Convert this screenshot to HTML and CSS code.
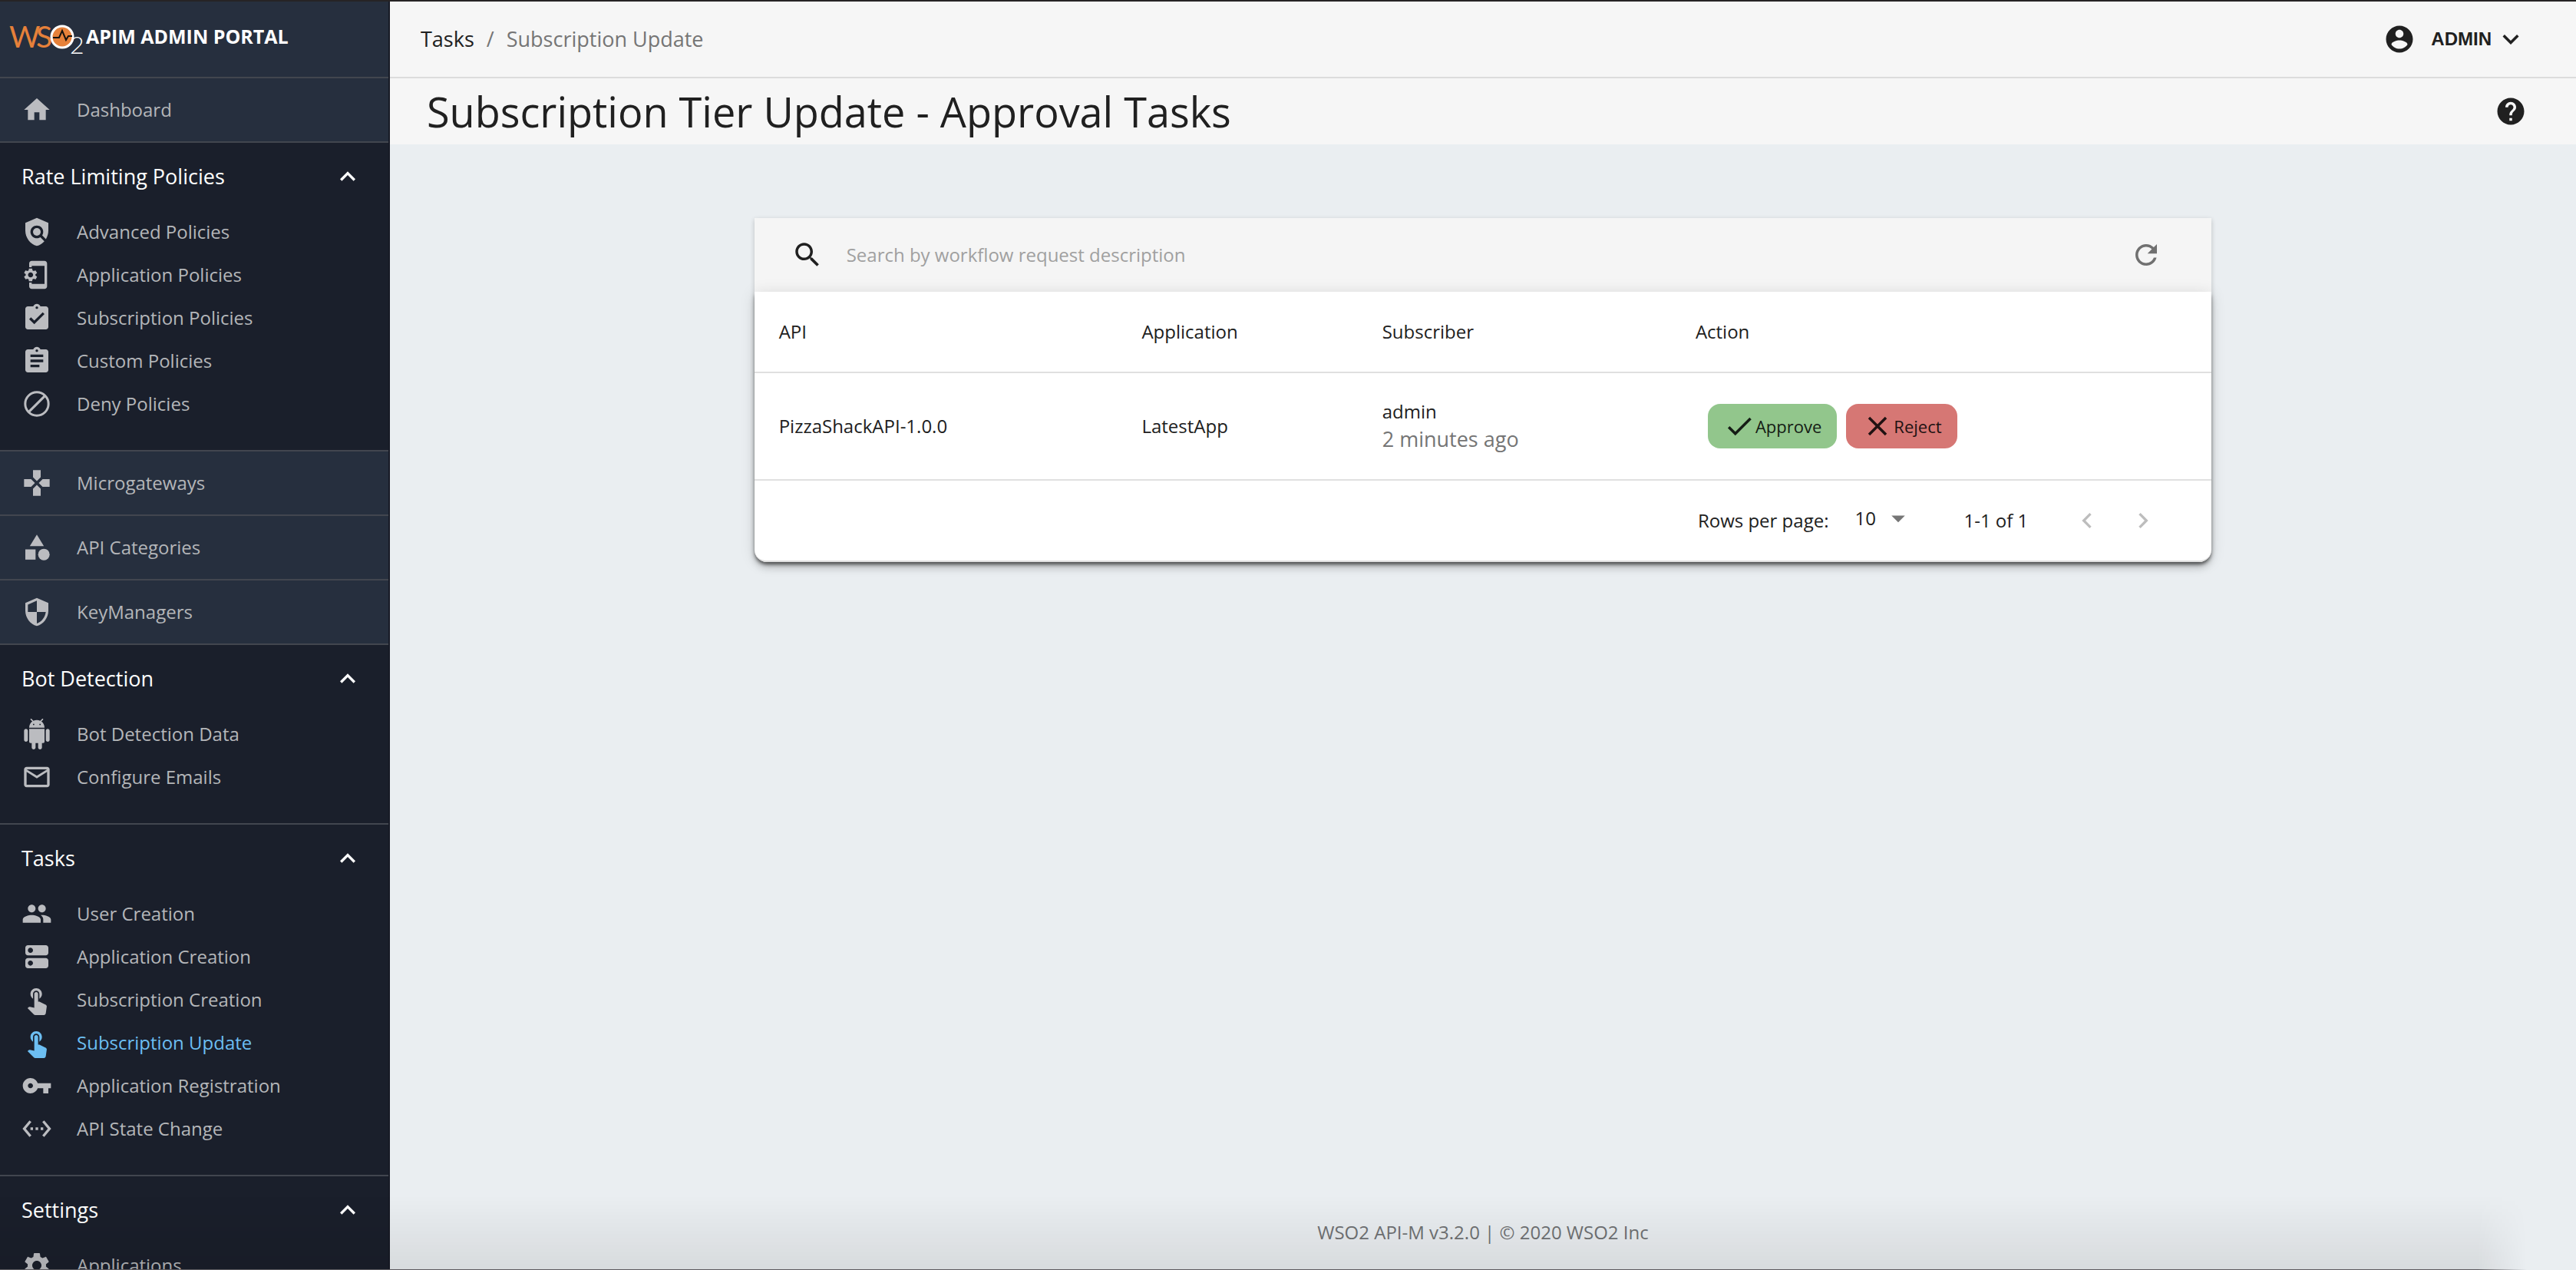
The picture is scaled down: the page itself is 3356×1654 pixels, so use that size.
FILE: index.html
```
<!DOCTYPE html>
<html lang="en">
<head>
<meta charset="utf-8">
<title>APIM Admin Portal - Subscription Update</title>
<meta name="viewport" content="width=device-width, initial-scale=1">
<link rel="stylesheet" href="styles.css">
</head>
<body>
<svg class="sprite" aria-hidden="true">
  <symbol id="chevron-up" viewBox="0 0 24 24"><path d="M12 8l-6 6 1.410 1.410L12 10.830l4.590 4.580L18 14z"/></symbol>
  <symbol id="touch" viewBox="0 0 24 24"><path d="M9 11.240V7.500C9 6.120 10.120 5 11.500 5S14 6.120 14 7.500v3.740c1.210-.81 2-2.180 2-3.740C16 5.010 13.990 3 11.500 3S7 5.010 7 7.500c0 1.560.79 2.930 2 3.740zm9.840 4.630l-4.540-2.260c-.17-.07-.35-.11-.54-.11H13v-6c0-.83-.67-1.500-1.500-1.500S10 6.670 10 7.500v10.740l-3.430-.72c-.08-.01-.15-.03-.24-.03-.31 0-.59.13-.79.33l-.79.8 4.940 4.940c.27.27.65.44 1.060.44h6.790c.75 0 1.330-.55 1.440-1.280l.75-5.270c.01-.07.02-.14.02-.2 0-.62-.38-1.160-.91-1.380z"/></symbol>
</svg>
<div class="app">
  <aside class="sidebar">
    <a class="brand" href="#" aria-label="WSO2 APIM Admin Portal">
      <svg class="brand-logo" viewBox="0 0 96 44">
        <text class="logo-ws" x="0" y="31">W</text>
        <text class="logo-ws" x="35" y="31">S</text>
        <circle cx="69" cy="17" r="14" fill="#e6813a" stroke="#fff" stroke-width="3"/>
        <path d="M57 18h8l4-9 5 12 3-5h5" fill="none" stroke="#16130f" stroke-width="2"/>
        <text class="logo-two" x="79" y="39">2</text>
      </svg>
      <span>APIM ADMIN PORTAL</span>
    </a>
    <nav>
      <a class="nav-link solo" href="#"><svg viewBox="0 0 24 24"><path d="M10 20v-6h4v6h5v-8h3L12 3 2 12h3v8z"/></svg>Dashboard</a>
      <section class="nav-group">
        <button class="group-title" type="button">Rate Limiting Policies<svg><use href="#chevron-up"/></svg></button>
        <a class="nav-link" href="#"><svg viewBox="0 0 24 24"><path d="M21 5l-9-4-9 4v6c0 5.550 3.840 10.740 9 12 2.300-.56 4.330-1.900 5.880-3.710l-3.120-3.120c-1.940 1.290-4.580 1.070-6.290-.64-1.950-1.950-1.950-5.120 0-7.070 1.950-1.950 5.120-1.950 7.070 0 1.710 1.710 1.920 4.350.64 6.290l2.900 2.900C20.290 15.690 21 13.380 21 11V5z"/><circle cx="12" cy="12" r="3"/></svg>Advanced Policies</a>
        <a class="nav-link" href="#"><svg viewBox="0 0 24 24"><path d="M18 1H8c-1.100 0-2 .9-2 2v3h2V5h10v14H8v-1H6v3c0 1.100.9 2 2 2h10c1.100 0 2-.9 2-2V3c0-1.100-.9-2-2-2z"/><path transform="translate(-.9 0)" d="M11.800 12.500v-1l1.100-.8c.1-.1.1-.2.1-.3l-1-1.700c-.1-.1-.2-.2-.3-.1l-1.300.4c-.3-.2-.6-.4-.9-.5l-.2-1.300c0-.1-.1-.2-.3-.2H7c-.1 0-.2.1-.3.2l-.2 1.300c-.3.1-.6.3-.9.5l-1.300-.5c-.1 0-.2 0-.3.1l-1 1.700c-.1.1 0 .2.1.3l1.100.8v1l-1.100.8c-.1.2-.1.3-.1.4l1 1.700c.1.1.2.2.3.1l1.300-.4c.3.2.6.4.9.5l.2 1.300c0 .1.1.2.3.2h2c.1 0 .2-.1.3-.2l.2-1.300c.3-.1.6-.3.9-.5l1.300.5c.1 0 .2 0 .3-.1l1-1.700c.1-.1 0-.2-.1-.3l-1.100-.9zM8 14c-1.100 0-2-.9-2-2s.9-2 2-2 2 .9 2 2-.9 2-2 2z"/></svg>Application Policies</a>
        <a class="nav-link" href="#"><svg viewBox="0 0 24 24"><path d="M19 3h-4.180C14.400 1.840 13.300 1 12 1s-2.400.84-2.820 2H5c-1.100 0-2 .9-2 2v14c0 1.100.9 2 2 2h14c1.100 0 2-.9 2-2V5c0-1.100-.9-2-2-2zm-7 0c.55 0 1 .45 1 1s-.45 1-1 1-1-.45-1-1 .45-1 1-1zm-2 14l-4-4 1.410-1.410L10 14.170l6.590-6.590L18 9l-8 8z"/></svg>Subscription Policies</a>
        <a class="nav-link" href="#"><svg viewBox="0 0 24 24"><path d="M19 3h-4.180C14.400 1.840 13.300 1 12 1s-2.400.84-2.820 2H5c-1.100 0-2 .9-2 2v14c0 1.100.9 2 2 2h14c1.100 0 2-.9 2-2V5c0-1.100-.9-2-2-2zm-7 0c.55 0 1 .45 1 1s-.45 1-1 1-1-.45-1-1 .45-1 1-1zm2 14H7v-2h7v2zm3-4H7v-2h10v2zm0-4H7V7h10v2z"/></svg>Custom Policies</a>
        <a class="nav-link" href="#"><svg viewBox="0 0 24 24"><circle cx="12" cy="12" r="9.100" fill="none" stroke="currentColor" stroke-width="1.800"/><path d="M18.400 5.600L5.600 18.400" stroke="currentColor" stroke-width="1.900"/></svg>Deny Policies</a>
      </section>
      <a class="nav-link solo" href="#"><svg viewBox="0 0 24 24"><path d="M15 7.500V2H9v5.500l3 3 3-3zM7.500 9H2v6h5.500l3-3-3-3zM9 16.500V22h6v-5.500l-3-3-3 3zM16.500 9l-3 3 3 3H22V9h-5.500z"/></svg>Microgateways</a>
      <a class="nav-link solo" href="#"><svg viewBox="0 0 24 24"><path d="M12 2l-5.500 9h11z"/><circle cx="17.500" cy="17.500" r="4.500"/><path d="M3 13.500h8v8H3z"/></svg>API Categories</a>
      <a class="nav-link solo" href="#"><svg viewBox="0 0 24 24"><path d="M12 1L3 5v6c0 5.550 3.840 10.740 9 12 5.160-1.260 9-6.450 9-12V5l-9-4zm0 10.990h7c-.53 4.120-3.280 7.790-7 8.940V12H5V6.300l7-3.110v8.800z"/></svg>KeyManagers</a>
      <section class="nav-group">
        <button class="group-title" type="button">Bot Detection<svg><use href="#chevron-up"/></svg></button>
        <a class="nav-link" href="#"><svg viewBox="0 0 24 24"><path d="M6 18c0 .55.45 1 1 1h1v3.500c0 .83.67 1.500 1.500 1.500s1.500-.67 1.500-1.500V19h2v3.500c0 .83.67 1.500 1.500 1.500s1.500-.67 1.500-1.500V19h1c.55 0 1-.45 1-1V8H6v10zM3.500 8C2.670 8 2 8.670 2 9.500v7c0 .83.67 1.500 1.500 1.500S5 17.330 5 16.500v-7C5 8.670 4.330 8 3.500 8zm17 0c-.83 0-1.500.67-1.500 1.500v7c0 .83.67 1.500 1.500 1.500s1.500-.67 1.500-1.500v-7c0-.83-.67-1.500-1.500-1.500zm-4.970-5.840l1.300-1.300c.2-.2.2-.51 0-.71-.2-.2-.51-.2-.71 0l-1.480 1.480C13.850 1.230 12.950 1 12 1c-.96 0-1.860.23-2.660.63L7.850.15c-.2-.2-.51-.2-.71 0-.2.2-.2.51 0 .71l1.310 1.310C6.970 3.260 6 5.010 6 7h12c0-1.990-.97-3.750-2.470-4.840zM10 5H9V4h1v1zm5 0h-1V4h1v1z"/></svg>Bot Detection Data</a>
        <a class="nav-link" href="#"><svg viewBox="0 0 24 24"><path d="M20 4H4c-1.100 0-2 .9-2 2v12c0 1.100.9 2 2 2h16c1.100 0 2-.9 2-2V6c0-1.100-.9-2-2-2zm0 14H4V8l8 5 8-5v10zm-8-7L4 6h16l-8 5z"/></svg>Configure Emails</a>
      </section>
      <section class="nav-group">
        <button class="group-title" type="button">Tasks<svg><use href="#chevron-up"/></svg></button>
        <a class="nav-link" href="#"><svg viewBox="0 0 24 24"><path d="M16 11c1.660 0 2.990-1.340 2.990-3S17.660 5 16 5c-1.660 0-3 1.340-3 3s1.340 3 3 3zm-8 0c1.660 0 2.990-1.340 2.990-3S9.660 5 8 5C6.340 5 5 6.340 5 8s1.340 3 3 3zm0 2c-2.330 0-7 1.170-7 3.500V19h14v-2.500c0-2.330-4.670-3.500-7-3.500zm8 0c-.29 0-.62.02-.97.05 1.160.84 1.970 1.970 1.970 3.450V19h6v-2.500c0-2.330-4.670-3.500-7-3.500z"/></svg>User Creation</a>
        <a class="nav-link" href="#"><svg viewBox="0 0 24 24"><path d="M19 13H5c-1.100 0-2 .9-2 2v4c0 1.100.9 2 2 2h14c1.100 0 2-.9 2-2v-4c0-1.100-.9-2-2-2zM7 19c-1.100 0-2-.9-2-2s.9-2 2-2 2 .9 2 2-.9 2-2 2zM19 3H5c-1.100 0-2 .9-2 2v4c0 1.100.9 2 2 2h14c1.100 0 2-.9 2-2V5c0-1.100-.9-2-2-2zM7 9c-1.100 0-2-.9-2-2s.9-2 2-2 2 .9 2 2-.9 2-2 2z"/></svg>Application Creation</a>
        <a class="nav-link" href="#"><svg><use href="#touch"/></svg>Subscription Creation</a>
        <a class="nav-link active" href="#" aria-current="page"><svg><use href="#touch"/></svg>Subscription Update</a>
        <a class="nav-link" href="#"><svg viewBox="0 0 24 24"><path d="M12.650 10C11.830 7.670 9.610 6 7 6c-3.310 0-6 2.690-6 6s2.690 6 6 6c2.610 0 4.830-1.670 5.650-4H17v4h4v-4h2v-4H12.650zM7 14c-1.100 0-2-.9-2-2s.9-2 2-2 2 .9 2 2-.9 2-2 2z"/></svg>Application Registration</a>
        <a class="nav-link" href="#"><svg viewBox="0 0 24 24"><path d="M7.770 6.760L6.230 5.480.82 12l5.410 6.520 1.540-1.280L3.420 12l4.350-5.240zM7 13h2v-2H7v2zm10-2h-2v2h2v-2zm-6 2h2v-2h-2v2zm6.770-7.520l-1.540 1.280L20.580 12l-4.350 5.240 1.540 1.280L23.180 12l-5.410-6.520z"/></svg>API State Change</a>
      </section>
      <section class="nav-group">
        <button class="group-title" type="button">Settings<svg><use href="#chevron-up"/></svg></button>
        <a class="nav-link" href="#"><svg viewBox="0 0 24 24"><path d="M19.140 12.940c.04-.3.06-.61.06-.94 0-.32-.02-.64-.07-.94l2.030-1.580c.18-.14.23-.41.12-.61l-1.920-3.320c-.12-.22-.37-.29-.59-.22l-2.390.96c-.5-.38-1.030-.7-1.620-.94l-.36-2.540c-.04-.24-.24-.41-.48-.41h-3.840c-.24 0-.43.17-.47.41l-.36 2.540c-.59.24-1.130.57-1.620.94l-2.390-.96c-.22-.08-.47 0-.59.22L2.740 8.870c-.12.21-.08.47.12.61l2.030 1.580c-.05.3-.09.63-.09.94s.02.64.07.94l-2.030 1.580c-.18.14-.23.41-.12.61l1.920 3.320c.12.22.37.29.59.22l2.390-.96c.5.38 1.030.7 1.620.94l.36 2.540c.05.24.24.41.48.41h3.840c.24 0 .44-.17.47-.41l.36-2.540c.59-.24 1.130-.56 1.620-.94l2.390.96c.22.08.47 0 .59-.22l1.920-3.320c.12-.22.07-.47-.12-.61l-2.010-1.580zM12 15.600c-1.980 0-3.600-1.620-3.600-3.600s1.620-3.600 3.600-3.600 3.600 1.620 3.600 3.600-1.620 3.600-3.600 3.600z"/></svg>Applications</a>
      </section>
    </nav>
  </aside>

  <div class="page">
    <header class="topbar">
      <nav class="breadcrumb" aria-label="Breadcrumb">
        <a href="#">Tasks</a><span>/</span><span>Subscription Update</span>
      </nav>
      <button class="account" type="button">
        <svg class="icon" viewBox="0 0 24 24"><path d="M12 2C6.480 2 2 6.480 2 12s4.480 10 10 10 10-4.480 10-10S17.520 2 12 2zm0 3c1.660 0 3 1.340 3 3s-1.340 3-3 3-3-1.340-3-3 1.340-3 3-3zm0 14.200c-2.500 0-4.710-1.280-6-3.220.03-1.990 4-3.080 6-3.080 1.990 0 5.970 1.090 6 3.080-1.290 1.940-3.500 3.220-6 3.220z"/></svg>
        <span>ADMIN</span>
        <svg class="icon" viewBox="0 0 24 24"><path d="M7.410 8.590L12 13.170l4.590-4.580L18 10l-6 6-6-6z"/></svg>
      </button>
    </header>
    <div class="title-bar">
      <h1>Subscription Tier Update - Approval Tasks</h1>
      <button class="bare" type="button" aria-label="Help">
        <svg class="icon" viewBox="0 0 24 24"><path d="M12 2C6.480 2 2 6.480 2 12s4.480 10 10 10 10-4.480 10-10S17.520 2 12 2zm1 17h-2v-2h2v2zm2.070-7.750l-.9.92C13.450 12.900 13 13.500 13 15h-2v-.5c0-1.100.45-2.100 1.170-2.830l1.240-1.260c.37-.36.59-.86.59-1.410 0-1.100-.9-2-2-2s-2 .9-2 2H8c0-2.210 1.790-4 4-4s4 1.790 4 4c0 .88-.36 1.680-.93 2.250z"/></svg>
      </button>
    </div>

    <main class="content">
      <div class="card">
        <div class="search-bar">
          <label for="search" aria-label="Search"><svg class="icon" viewBox="0 0 24 24"><path d="M15.500 14h-.79l-.28-.27C15.410 12.590 16 11.110 16 9.500 16 5.910 13.090 3 9.500 3S3 5.910 3 9.500 5.910 16 9.500 16c1.610 0 3.090-.59 4.230-1.570l.27.28v.79l5 4.990L20.490 19l-4.990-5zm-6 0C7.010 14 5 11.990 5 9.500S7.010 5 9.500 5 14 7.010 14 9.500 11.990 14 9.500 14z"/></svg></label>
          <input id="search" type="text" placeholder="Search by workflow request description">
          <button class="bare refresh" type="button" aria-label="Refresh">
            <svg class="icon" viewBox="0 0 24 24"><path d="M17.650 6.350C16.200 4.900 14.210 4 12 4c-4.420 0-7.990 3.580-7.990 8s3.570 8 7.990 8c3.730 0 6.840-2.550 7.730-6h-2.080c-.82 2.330-3.040 4-5.650 4-3.310 0-6-2.690-6-6s2.690-6 6-6c1.660 0 3.140.69 4.220 1.780L13 11h7V4l-2.350 2.350z"/></svg>
          </button>
        </div>
        <div class="sheet">
          <table>
            <thead>
              <tr><th class="col-api">API</th><th class="col-app">Application</th><th class="col-sub">Subscriber</th><th>Action</th></tr>
            </thead>
            <tbody>
              <tr>
                <td>PizzaShackAPI-1.0.0</td>
                <td>LatestApp</td>
                <td><div>admin</div><div class="when">2 minutes ago</div></td>
                <td>
                  <div class="actions">
                    <button class="approve" type="button"><svg class="icon" viewBox="0 0 24 24"><path d="M9 16.200L4.800 12l-1.400 1.400L9 19 21 7l-1.400-1.400L9 16.200z"/></svg>Approve</button>
                    <button class="reject" type="button"><svg class="icon" viewBox="0 0 24 24"><path d="M19 6.410L17.590 5 12 10.590 6.410 5 5 6.410 10.590 12 5 17.590 6.410 19 12 13.410 17.590 19 19 17.590 13.410 12z"/></svg>Reject</button>
                  </div>
                </td>
              </tr>
            </tbody>
          </table>
          <div class="pager">
            <label for="rows">Rows per page:</label>
            <div class="rows-select">
              <select id="rows"><option>10</option><option>20</option><option>30</option></select>
              <svg class="icon" viewBox="0 0 24 24"><path d="M7 10l5 5 5-5z"/></svg>
            </div>
            <span class="range">1-1 of 1</span>
            <button class="step" type="button" disabled aria-label="Previous page"><svg viewBox="0 0 24 24"><path d="M15.410 7.410L14 6l-6 6 6 6 1.410-1.410L10.830 12z"/></svg></button>
            <button class="step" type="button" disabled aria-label="Next page"><svg viewBox="0 0 24 24"><path d="M10 6L8.590 7.410 13.170 12l-4.580 4.590L10 18l6-6z"/></svg></button>
          </div>
        </div>
      </div>
    </main>
    <footer>WSO2 API-M v3.2.0 | © 2020 WSO2 Inc</footer>
  </div>
</div>
</body>
</html>
```
FILE: styles.css
```
* { box-sizing: border-box; }

body {
  margin: 0;
  font: 24px/34px "Open Sans", "Noto Sans", sans-serif;
  color: #202020;
  background: #eaeef1;
}

button, input, select {
  font: inherit;
  color: inherit;
  border: 0;
  padding: 0;
  background: none;
}

a { color: inherit; text-decoration: none; }
svg { display: block; flex: none; fill: currentColor; }
.sprite { display: none; }
.icon { width: 42px; height: 42px; }

.app {
  display: flex;
  height: 100vh;
  overflow: hidden;
  border-top: 2px solid #262425;
}

/* soft shade along the lower edge of the window */
.app::after {
  content: "";
  position: fixed;
  inset: auto 0 0 0;
  height: 96px;
  border-bottom: 1px solid #5c5a5f;
  background: linear-gradient(transparent, rgba(0, 0, 0, .08));
  mask-image: linear-gradient(to left, transparent 64px, #000 128px);
  pointer-events: none;
}

/* Sidebar */
.sidebar {
  flex: none;
  width: 508px;
  overflow: hidden;
  border-right: 2px solid #171a25;
  background: #1a1f2b;
}

.brand {
  display: flex;
  align-items: flex-start;
  gap: 4px;
  height: 100px;
  padding: 29px 12px 0;
  border-bottom: 2px solid #42464f;
  background: #262f3e;
  color: #fff;
  font-weight: 700;
  font-size: 25px;
}

.brand span { line-height: 32px; }
.brand-logo { width: 96px; height: 44px; overflow: visible; }
.logo-ws { font: 400 39px Lato, sans-serif; fill: #e6813a; }
.logo-two { font: 300 32px Lato, sans-serif; fill: #fff; }

.nav-link {
  display: flex;
  align-items: center;
  gap: 32px;
  height: 56px;
  padding: 0 28px;
  color: #b4b6b9;
}

.nav-link svg { width: 40px; height: 40px; color: #bbbcc0; }
.nav-link.active, .nav-link.active svg { color: #6cbef2; }

.solo {
  height: 84px;
  border-bottom: 2px solid #42464f;
  background: #262f3e;
}

.nav-group {
  padding-bottom: 32px;
  border-bottom: 2px solid #42464f;
}

.group-title {
  display: flex;
  align-items: center;
  justify-content: space-between;
  width: 100%;
  height: 88px;
  padding: 0 33px 0 28px;
  color: #fff;
  font-size: 27px;
}

.group-title svg { width: 40px; height: 40px; }

/* Page */
.page {
  flex: 1;
  display: flex;
  flex-direction: column;
  min-width: 0;
}

.topbar, .title-bar {
  display: flex;
  align-items: center;
  justify-content: space-between;
  padding: 0 64px 0 40px;
  background: #f6f6f6;
}

.topbar { height: 100px; border-bottom: 2px solid #dcdcdc; }
.title-bar { height: 86px; padding-left: 48px; }

.breadcrumb { display: flex; gap: 16px; font-size: 27px; color: #757575; }
.breadcrumb a { color: #202020; }

.account {
  display: flex;
  align-items: center;
  gap: 4px;
  font: 700 24px "Liberation Sans", Arial, sans-serif;
}

.account span { margin-left: 16px; }

h1 { margin: 0; font-weight: 400; font-size: 54px; line-height: 72px; }

.content {
  flex: 1;
  display: grid;
  grid-template-columns: 1fr 4fr 1fr;
  align-items: start;
  padding-top: 96px;
}

.card {
  grid-column: 2;
  border-radius: 0 0 16px 16px;
  background: #f5f5f5;
  box-shadow: 0 2px 6px rgba(0, 0, 0, .2);
}

.search-bar {
  display: flex;
  align-items: center;
  height: 96px;
  padding: 0 64px 0 48px;
}

.search-bar input { flex: 1; min-width: 0; height: 48px; margin-left: 30px; padding-bottom: 2px; outline: 0; }
.search-bar input::placeholder { color: #a0a0a0; opacity: 1; }
.refresh { color: #707070; }

.sheet {
  border-radius: 0 0 16px 16px;
  background: #fff;
  box-shadow:
    0 4px 4px -1px rgba(0, 0, 0, .5),
    0 8px 10px rgba(0, 0, 0, .14),
    0 2px 20px rgba(0, 0, 0, .12);
}

table { width: 100%; table-layout: fixed; border-collapse: collapse; }
tr { border-bottom: 2px solid #e0e0e0; }
th, td { padding: 0 32px; text-align: left; font-weight: 400; }
th { height: 105px; }
td { height: 140px; }
.col-api { width: 24.9%; }
.col-app { width: 16.5%; }
.col-sub { width: 21.5%; }
.when { font-size: 27px; line-height: 38px; color: #757575; }

.actions { display: flex; gap: 12px; margin-left: 16px; }

.actions button {
  display: flex;
  align-items: center;
  height: 58px;
  padding: 0 20px;
  border-radius: 16px;
  font-size: 22px;
  color: #151c15;
}

.actions .approve { background: #92c68c; }
.actions .reject { background: #d67774; color: #201212; }

.pager {
  display: flex;
  align-items: center;
  justify-content: flex-end;
  height: 106px;
  padding-right: 53px;
  border-bottom: 2px solid #e0e0e0;
  border-radius: 0 0 16px 16px;
}

.rows-select {
  position: relative;
  width: 80px;
  height: 48px;
  margin: 0 64px 0 32px;
}

.rows-select select { appearance: none; width: 100%; height: 42px; padding-left: 2px; }
.rows-select .icon { position: absolute; top: 0; right: 0; color: #757575; pointer-events: none; }
.range { margin-right: 40px; }

.step { width: 73px; color: #bdbdbd; }
.step svg { width: 40px; height: 40px; margin: auto; }

footer { padding-bottom: 32px; text-align: center; color: #707274; }
```
